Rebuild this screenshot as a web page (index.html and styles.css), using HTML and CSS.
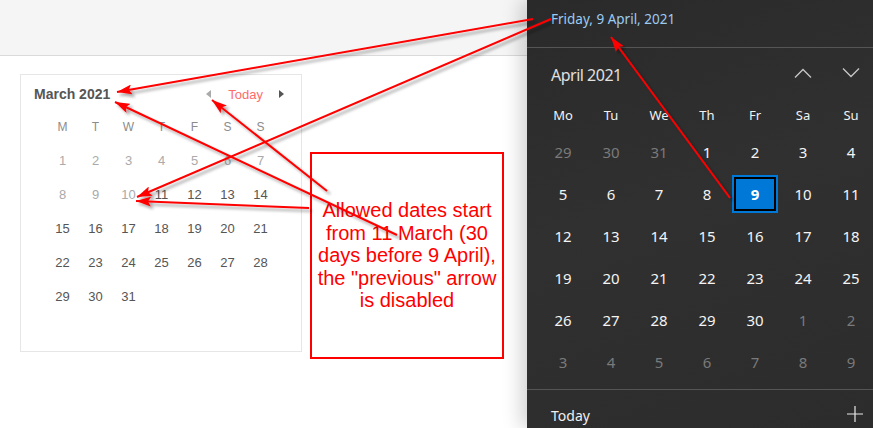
FILE: index.html
```html
<!DOCTYPE html>
<html>
<head>
<meta charset="utf-8">
<link rel="stylesheet" href="styles.css">
</head>
<body>
<div class="screen">
  <div class="main">
    <div class="topbar"></div>
    <div class="content">
      <div class="card">
        <div class="card-head">
          <span class="month">March 2021</span>
          <div class="nav">
            <span class="tri tri-left"></span>
            <span class="today">Today</span>
            <span class="tri tri-right"></span>
          </div>
        </div>
        <div class="grid">
          <span class="wd">M</span><span class="wd">T</span><span class="wd">W</span><span class="wd">T</span><span class="wd">F</span><span class="wd">S</span><span class="wd">S</span>
          <span class="d off">1</span><span class="d off">2</span><span class="d off">3</span><span class="d off">4</span><span class="d off">5</span><span class="d off">6</span><span class="d off">7</span>
          <span class="d off">8</span><span class="d off">9</span><span class="d off">10</span><span class="d">11</span><span class="d">12</span><span class="d">13</span><span class="d">14</span>
          <span class="d">15</span><span class="d">16</span><span class="d">17</span><span class="d">18</span><span class="d">19</span><span class="d">20</span><span class="d">21</span>
          <span class="d">22</span><span class="d">23</span><span class="d">24</span><span class="d">25</span><span class="d">26</span><span class="d">27</span><span class="d">28</span>
          <span class="d">29</span><span class="d">30</span><span class="d">31</span>
        </div>
      </div>
      <div class="note">Allowed dates start<br>from 11 March (30<br>days before 9 April),<br>the "previous" arrow<br>is disabled</div>
    </div>
  </div>

  <div class="flyout">
    <div class="fly-date">Friday, 9 April, 2021</div>
    <div class="fly-month">
      <span class="fly-title">April 2021</span>
      <div class="chevs">
        <span class="chev"><svg width="18" height="10" viewBox="0 0 18 10"><path d="M1 9.5 L9 1.5 L17 9.5" fill="none" stroke="#c8c8c8" stroke-width="1.3"/></svg></span>
        <span class="chev"><svg width="18" height="10" viewBox="0 0 18 10"><path d="M1 0.5 L9 8.5 L17 0.5" fill="none" stroke="#c8c8c8" stroke-width="1.3"/></svg></span>
      </div>
    </div>
    <div class="fly-grid">
      <span class="fw">Mo</span><span class="fw">Tu</span><span class="fw">We</span><span class="fw">Th</span><span class="fw">Fr</span><span class="fw">Sa</span><span class="fw">Su</span>
      <span class="fd dim">29</span><span class="fd dim">30</span><span class="fd dim">31</span><span class="fd">1</span><span class="fd">2</span><span class="fd">3</span><span class="fd">4</span>
      <span class="fd">5</span><span class="fd">6</span><span class="fd">7</span><span class="fd">8</span><span class="fd sel"><b>9</b></span><span class="fd">10</span><span class="fd">11</span>
      <span class="fd">12</span><span class="fd">13</span><span class="fd">14</span><span class="fd">15</span><span class="fd">16</span><span class="fd">17</span><span class="fd">18</span>
      <span class="fd">19</span><span class="fd">20</span><span class="fd">21</span><span class="fd">22</span><span class="fd">23</span><span class="fd">24</span><span class="fd">25</span>
      <span class="fd">26</span><span class="fd">27</span><span class="fd">28</span><span class="fd">29</span><span class="fd">30</span><span class="fd dim">1</span><span class="fd dim">2</span>
      <span class="fd dim">3</span><span class="fd dim">4</span><span class="fd dim">5</span><span class="fd dim">6</span><span class="fd dim">7</span><span class="fd dim">8</span><span class="fd dim">9</span>
    </div>
    <div class="fly-foot">
      <span class="fly-today">Today</span>
      <svg class="plus" width="16" height="16" viewBox="0 0 16 16"><path d="M8 0 V16 M0 8 H16" stroke="#e8e8e8" stroke-width="1.2"/></svg>
    </div>
  </div>

  <svg class="arrows" width="873" height="428" viewBox="0 0 873 428">
    <defs>
      <filter id="sh" x="-20%" y="-20%" width="140%" height="140%">
        <feDropShadow dx="3" dy="3" stdDeviation="1.6" flood-color="#000" flood-opacity="0.35"/>
      </filter>
      <marker id="ah" markerUnits="userSpaceOnUse" markerWidth="16" markerHeight="10" refX="15" refY="5" orient="auto">
        <path d="M0 0 L15 5 L0 10 L3 5 z" fill="#ff0000"/>
      </marker>
    </defs>
    <g stroke="#ff0000" stroke-width="2" fill="none" filter="url(#sh)" marker-end="url(#ah)">
      <line x1="533" y1="19" x2="117" y2="92"/>
      <line x1="551" y1="19" x2="137" y2="197"/>
      <line x1="730" y1="198" x2="611" y2="37"/>
      <line x1="397" y1="235" x2="115" y2="102"/>
      <line x1="327" y1="191" x2="212" y2="100"/>
      <line x1="309" y1="208" x2="136" y2="201"/>
    </g>
  </svg>
</div>
</body>
</html>
```
FILE: styles.css
```css
html, body {
  margin: 0;
  padding: 0;
  background: #ffffff;
}
.screen {
  position: relative;
  width: 873px;
  height: 428px;
  overflow: hidden;
  display: flex;
  font-family: "Liberation Sans", Arial, sans-serif;
}
.main {
  flex: 0 0 527px;
  display: flex;
  flex-direction: column;
}
.topbar {
  height: 55px;
  background: #f5f5f5;
  border-bottom: 1px solid #dadada;
}
.content {
  display: flex;
  align-items: flex-start;
  padding-left: 20px;
}
.card {
  margin-top: 18px;
  width: 282px;
  height: 278px;
  box-sizing: border-box;
  border: 1px solid #e6e6e6;
  padding-top: 5px;
}
.card-head {
  height: 28px;
  display: flex;
  align-items: center;
  justify-content: space-between;
  padding-left: 13px;
  padding-right: 17px;
}
.month {
  font-weight: bold;
  font-size: 14px;
  color: #555;
}
.nav {
  display: flex;
  align-items: center;
}
.tri {
  width: 0;
  height: 0;
  border-top: 4px solid transparent;
  border-bottom: 4px solid transparent;
}
.tri-left {
  border-right: 5px solid #aaa;
}
.tri-right {
  border-left: 5px solid #555;
}
.today {
  font-size: 13px;
  color: #ff6b6b;
  margin: 0 16px 0 17px;
}
.grid {
  margin-top: 2px;
  padding-left: 25px;
  display: grid;
  grid-template-columns: repeat(7, 33px);
  grid-template-rows: 33px repeat(5, 34px);
  align-items: center;
  justify-items: center;
}
.wd {
  font-size: 12px;
  color: #8c8c8c;
}
.d {
  font-size: 13px;
  color: #555;
}
.d.off {
  color: #aaa;
}
.note {
  margin-top: 96px;
  margin-left: 8px;
  width: 194px;
  height: 207px;
  box-sizing: border-box;
  border: 2px solid #ff0000;
  display: flex;
  align-items: center;
  justify-content: center;
  text-align: center;
  font-size: 20px;
  line-height: 22.5px;
  color: #ff0000;
}
.flyout {
  flex: 0 0 348px;
  height: 428px;
  background: linear-gradient(160deg, #2a2a2a 0%, #303030 45%, #2c2c2c 100%);
  box-shadow: -6px 0 18px rgba(0, 0, 0, 0.18);
  font-family: "Noto Sans", "Open Sans", sans-serif;
  color: #fff;
  display: flex;
  flex-direction: column;
}
.fly-date {
  height: 48px;
  box-sizing: border-box;
  padding: 8px 0 0 24px;
  font-size: 13.5px;
  line-height: 22px;
  color: #9ccbf2;
  border-bottom: 1px solid #555;
}
.fly-month {
  height: 50px;
  box-sizing: border-box;
  padding-top: 3px;
  display: flex;
  align-items: center;
  justify-content: space-between;
  padding-left: 24px;
}
.fly-title {
  font-size: 16px;
  letter-spacing: -0.5px;
  color: #e0e0e0;
}
.chevs {
  display: flex;
  margin-top: -3px;
}
.chev {
  width: 48px;
  display: flex;
  justify-content: center;
}
.fly-grid {
  padding-left: 12px;
  display: grid;
  grid-template-columns: repeat(7, 48px);
  grid-template-rows: 33px repeat(6, 42px);
  align-items: center;
  justify-items: center;
  border-bottom: 1px solid #555;
  padding-bottom: 6px;
}
.fw {
  font-size: 13px;
  color: #f2f2f2;
}
.fd {
  font-size: 15px;
  color: #f4f4f4;
}
.fd.dim {
  color: #7a7a7a;
}
.fd.sel {
  width: 46px;
  height: 38px;
  box-sizing: border-box;
  border: 2px solid #0078d7;
  display: flex;
  align-items: center;
  justify-content: center;
}
.fd.sel b {
  width: 42px;
  height: 34px;
  box-sizing: border-box;
  border: 2px solid #000;
  background: #0078d7;
  display: flex;
  align-items: center;
  justify-content: center;
  font-weight: bold;
  color: #fff;
}
.fly-foot {
  flex: 1;
  display: flex;
  align-items: center;
  justify-content: space-between;
  padding: 10px 12px 0 24px;
}
.fly-today {
  font-size: 14px;
  color: #f0f0f0;
  margin-top: 3px;
}
.arrows {
  position: absolute;
  left: 0;
  top: 0;
  pointer-events: none;
}
```
